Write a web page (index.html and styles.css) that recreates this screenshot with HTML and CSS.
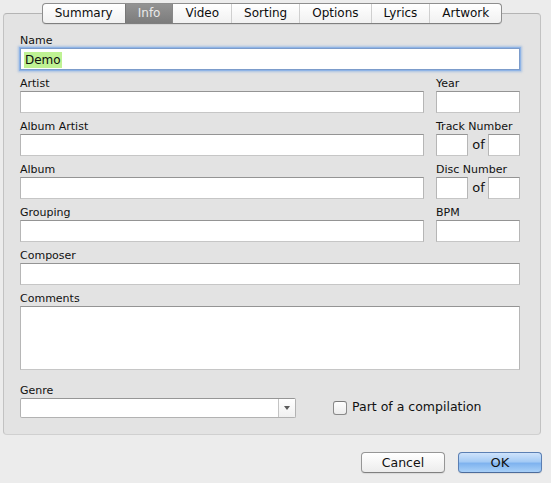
FILE: index.html
```html
<!DOCTYPE html>
<html>
<head>
<meta charset="utf-8">
<link rel="stylesheet" href="styles.css">
</head>
<body>
<div class="window">
  <div class="group">
    <div class="tabs">
      <span class="tab">Summary</span>
      <span class="tab active">Info</span>
      <span class="tab">Video</span>
      <span class="tab">Sorting</span>
      <span class="tab">Options</span>
      <span class="tab">Lyrics</span>
      <span class="tab">Artwork</span>
    </div>
    <div class="form">
      <div class="field">
        <label class="label">Name</label>
        <div class="input focused"><span class="sel">Demo</span></div>
      </div>
      <div class="pair">
        <div class="field"><label class="label">Artist</label><div class="input"></div></div>
        <div class="field"><label class="label">Year</label><div class="input"></div></div>
      </div>
      <div class="pair">
        <div class="field"><label class="label">Album Artist</label><div class="input"></div></div>
        <div class="field"><label class="label">Track Number</label>
          <div class="of-row"><div class="input small"></div><span class="of">of</span><div class="input small"></div></div>
        </div>
      </div>
      <div class="pair">
        <div class="field"><label class="label">Album</label><div class="input"></div></div>
        <div class="field"><label class="label">Disc Number</label>
          <div class="of-row"><div class="input small"></div><span class="of">of</span><div class="input small"></div></div>
        </div>
      </div>
      <div class="pair">
        <div class="field"><label class="label">Grouping</label><div class="input"></div></div>
        <div class="field"><label class="label">BPM</label><div class="input"></div></div>
      </div>
      <div class="field"><label class="label">Composer</label><div class="input"></div></div>
      <div class="field"><label class="label">Comments</label><div class="input area"></div></div>
      <div class="genre-row">
        <div class="field genre"><label class="label">Genre</label>
          <div class="select"><div class="select-text"></div><div class="select-btn"><span class="arrow"></span></div></div>
        </div>
        <div class="check"><span class="box"></span><span class="check-label">Part of a compilation</span></div>
      </div>
    </div>
  </div>
  <div class="buttons">
    <div class="btn">Cancel</div>
    <div class="btn ok">OK</div>
  </div>
</div>
</body>
</html>
```

FILE: styles.css
```css
html, body {
  margin: 0;
  padding: 0;
}
body {
  background: #ececec;
  font-family: "DejaVu Sans", "Liberation Sans", sans-serif;
  color: #1c1c1c;
}
.window {
  width: 551px;
  height: 483px;
  overflow: hidden;
  display: flex;
  flex-direction: column;
}
.group {
  margin: 13px 0 0 3px;
  width: 538px;
  box-sizing: border-box;
  border: 1px solid #c2c2c2;
  border-top-color: #b4b4b4;
  border-bottom-color: #d0d0d0;
  border-radius: 4px;
  background: #e3e3e3;
  display: flex;
  flex-direction: column;
}
.tabs {
  margin-top: -11px;
  align-self: center;
  display: flex;
  height: 21px;
  box-sizing: border-box;
  border: 1px solid #8e8e8e;
  border-bottom-color: #7f7f7f;
  border-radius: 4px;
  background: linear-gradient(#ffffff, #f1f1f1);
  overflow: hidden;
  box-shadow: 0 1px 0 rgba(0,0,0,0.06);
}
.tab {
  padding: 0 12px;
  font-size: 12px;
  line-height: 19px;
  color: #0d0d0d;
  border-left: 1px solid #cfcfcf;
}
.tab:first-child {
  border-left: none;
}
.tab.active {
  background: linear-gradient(#939393, #7c7c7c);
  color: #e9e9e9;
  border-left-color: #777;
}
.tab.active + .tab {
  border-left-color: #888;
}
.form {
  padding: 10px 20px 16px 16px;
  display: flex;
  flex-direction: column;
  gap: 7px;
}
.field {
  display: flex;
  flex-direction: column;
}
.label {
  font-size: 11px;
  line-height: 14px;
  height: 14px;
  color: #111;
}
.input {
  height: 22px;
  box-sizing: border-box;
  background: #fff;
  border: 1px solid #b6b6b6;
  border-top-color: #949494;
  border-bottom-color: #c6c6c6;
}
.input.focused {
  border: 1px solid #7c9ccb;
  box-shadow: 0 0 0 1px #8fb4e6, 0 0 2px 2px rgba(120,165,225,0.55);
  padding: 1px 0 0 3px;
  display: flex;
  align-items: center;
}
.sel {
  background: #bff293;
  font-size: 12px;
  line-height: 16px;
  padding: 0 1px;
  color: #0d0d0d;
}
.pair {
  display: grid;
  grid-template-columns: 404px 84px;
  column-gap: 12px;
}
.of-row {
  display: flex;
  align-items: center;
  justify-content: space-between;
}
.input.small {
  width: 32px;
}
.of {
  font-size: 13px;
  line-height: 22px;
  color: #111;
  margin-left: 1px;
}
.input.area {
  height: 64px;
}
.genre-row {
  margin-top: 7px;
  display: flex;
  align-items: flex-end;
}
.genre {
  width: 276px;
}
.select {
  height: 20px;
  box-sizing: border-box;
  display: flex;
  background: #fff;
  border: 1px solid #b2b2b2;
  border-top-color: #969696;
  border-radius: 2px;
}
.select-text {
  flex: 1;
}
.select-btn {
  width: 16px;
  border-left: 1px solid #c4c4c4;
  background: linear-gradient(#ffffff, #f0f0f0);
  display: flex;
  align-items: center;
  justify-content: center;
}
.arrow {
  width: 0;
  height: 0;
  border-left: 3px solid transparent;
  border-right: 3px solid transparent;
  border-top: 4px solid #5a5a5a;
}
.check {
  margin-left: 37px;
  height: 20px;
  display: flex;
  align-items: center;
  transform: translateY(-1px);
}
.box {
  width: 14px;
  height: 14px;
  box-sizing: border-box;
  border: 1px solid #8a8a8a;
  border-top-color: #7a7a7a;
  border-radius: 3px;
  background: linear-gradient(#fefefe, #ececec);
  margin-top: 1px;
}
.check-label {
  font-size: 12.5px;
  line-height: 16px;
  margin-left: 5px;
  color: #111;
}
.buttons {
  margin-top: 17px;
  display: flex;
  justify-content: flex-end;
  gap: 13px;
  padding-right: 9px;
}
.btn {
  width: 84px;
  height: 21px;
  box-sizing: border-box;
  border: 1px solid #969696;
  border-bottom-color: #808080;
  border-radius: 4px;
  background: linear-gradient(#ffffff, #ececec);
  font-size: 12.5px;
  line-height: 19px;
  text-align: center;
  color: #111;
  box-shadow: 0 1px 1px rgba(0,0,0,0.08);
}
.btn.ok {
  border-color: #5b7fb3;
  border-bottom-color: #4c6c9c;
  background: linear-gradient(#cfe3fb 0%, #a5cbf5 45%, #7fb3ef 55%, #a8d0f8 100%);
  font-size: 13px;
}
```
